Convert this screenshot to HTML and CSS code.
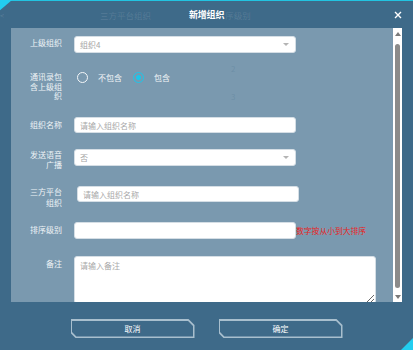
FILE: index.html
```html
<!DOCTYPE html>
<html lang="zh">
<head>
  <meta charset="UTF-8">
  <title>新增组织</title>
  <link rel="stylesheet" href="styles.css">
</head>
<body>
  <div class="dialog">
    <span class="corner corner-tl"></span>

    <div class="dlg-head">
      <span class="ghost ghost-left">&lt;</span>
      <span class="ghost ghost-a">三方平台组织</span>
      <span class="title">新增组织</span>
      <span class="ghost ghost-b">序级别</span>
      <span class="close">
        <svg width="8" height="8" viewBox="0 0 8 8"><path d="M1 1L7 7M7 1L1 7" stroke="#fff" stroke-width="1.4"/></svg>
      </span>
    </div>

    <div class="dlg-body">
      <div class="form-panel">
        <span class="ghost-num n2">2</span>
        <span class="ghost-num n3">3</span>

        <div class="row row-1">
          <label class="lbl">上级组织</label>
          <div class="select"><span>组织4</span><i class="caret"></i></div>
        </div>

        <div class="row row-2">
          <label class="lbl lbl-multi">通讯录包含上级组织</label>
          <div class="radios">
            <span class="radio"></span><span class="radio-text">不包含</span>
            <span class="radio checked"></span><span class="radio-text">包含</span>
          </div>
        </div>

        <div class="row row-3">
          <label class="lbl">组织名称</label>
          <input class="inp" type="text" placeholder="请输入组织名称">
        </div>

        <div class="row row-4">
          <label class="lbl lbl-multi">发送语音广播</label>
          <div class="select"><span>否</span><i class="caret"></i></div>
        </div>

        <div class="row row-5">
          <label class="lbl lbl-multi">三方平台组织</label>
          <input class="inp inp-shift" type="text" placeholder="请输入组织名称">
        </div>

        <div class="row row-6">
          <label class="lbl">排序级别</label>
          <input class="inp inp-sort" type="text">
          <span class="hint">数字按从小到大排序</span>
        </div>

        <div class="row row-7">
          <label class="lbl">备注</label>
          <textarea class="memo" placeholder="请输入备注"></textarea>
        </div>
      </div>

      <div class="scrollbar">
        <div class="sb-arrow sb-up"></div>
        <div class="sb-thumb"></div>
        <div class="sb-arrow sb-down"></div>
      </div>
    </div>

    <div class="dlg-foot">
      <button class="btn"><span class="btn-in">取消</span></button>
      <button class="btn"><span class="btn-in">确定</span></button>
    </div>

    <span class="corner corner-br"></span>
  </div>
</body>
</html>
```

FILE: styles.css
```css
html, body {
  margin: 0;
  padding: 0;
}

body {
  font-family: "Noto Sans CJK SC", "Noto Sans", sans-serif;
  background: #3e6a89;
  width: 413px;
  height: 350px;
  overflow: hidden;
}

.dialog {
  position: relative;
  width: 413px;
  height: 350px;
  border-top: 1px solid #22c4e2;
  box-sizing: border-box;
}

.corner {
  position: absolute;
  width: 12px;
  height: 12px;
  background: #22cdf0;
}

.corner-tl {
  top: -1px;
  left: 0;
  clip-path: polygon(0 0, 100% 0, 0 85%);
}

.corner-br {
  bottom: 0;
  right: 0;
  clip-path: polygon(100% 0, 100% 100%, 0 100%);
}

/* header */
.dlg-head {
  height: 27px;
  display: flex;
  align-items: center;
  font-size: 9px;
  color: #fff;
}

.ghost {
  color: rgba(255, 255, 255, 0.12);
  font-size: 8.5px;
}

.ghost-left {
  width: 4px;
  overflow: hidden;
}

.ghost-a {
  margin-left: 96px;
  width: 52px;
}

.title {
  margin-left: 37px;
  font-weight: bold;
  letter-spacing: -0.2px;
}

.ghost-b {
  margin-left: 1px;
}

.close {
  margin-left: auto;
  margin-right: 11px;
  height: 8px;
  display: flex;
}

/* body */
.dlg-body {
  display: flex;
  height: 274px;
  margin: 0 11px;
}

.form-panel {
  position: relative;
  flex: 1;
  background: #7a99af;
  overflow: hidden;
  padding-top: 8px;
  box-sizing: border-box;
}

.ghost-num {
  position: absolute;
  left: 220px;
  font-size: 8px;
  color: rgba(70, 110, 140, 0.25);
}

.n2 { top: 35px; }
.n3 { top: 63px; }

.row {
  display: flex;
  align-items: flex-start;
}

.row-1 { height: 36px; }
.row-2 { height: 45px; }
.row-3 { height: 32px; }
.row-4 { height: 37px; }
.row-5 { height: 36px; }
.row-6 { height: 34px; }

.lbl {
  width: 33px;
  margin-left: 18px;
  margin-right: 12px;
  text-align: right;
  font-size: 8px;
  line-height: 10px;
  color: #eef3f6;
  padding-top: 3px;
  flex-shrink: 0;
  word-break: break-all;
}

.row-1 .lbl { padding-top: 2px; }

.lbl-multi {
  padding-top: 0;
  line-height: 9.5px;
}

.row-4 .lbl { padding-top: 1px; line-height: 10px; }
.row-5 .lbl { padding-top: 0; line-height: 11px; }

.select,
.inp,
.memo {
  background: #fff;
  border: 1px solid #d5dee5;
  border-radius: 3px;
  box-sizing: border-box;
  font-family: inherit;
  font-size: 8px;
  color: #999;
}

.select {
  width: 222px;
  height: 17px;
  display: flex;
  align-items: center;
  padding: 0 6px 0 5px;
}

.select span {
  flex: 1;
  color: #a5a5a5;
}

.caret {
  width: 0;
  height: 0;
  border-left: 3px solid transparent;
  border-right: 3px solid transparent;
  border-top: 3px solid #b4b4b4;
}

.inp {
  width: 222px;
  height: 16px;
  padding: 0 5px;
  outline: none;
}

.inp::placeholder,
.memo::placeholder {
  color: #a8a8a8;
}

.inp-shift {
  margin-left: 3px;
}

.inp-sort {
  height: 17px;
}

.hint {
  font-size: 7.8px;
  color: #e8231d;
  line-height: 10px;
  margin-top: 4px;
  white-space: nowrap;
}

.radios {
  display: flex;
  align-items: center;
  height: 11px;
  margin-left: 3px;
  font-size: 8px;
  color: #f2f5f7;
}

.radio {
  width: 11px;
  height: 11px;
  border: 1px solid #f4f7f9;
  border-radius: 50%;
  box-sizing: border-box;
  display: flex;
  align-items: center;
  justify-content: center;
}

.radio.checked {
  border-color: #1dc6ea;
}

.radio.checked::after {
  content: "";
  width: 5px;
  height: 5px;
  border-radius: 50%;
  background: #1dc6ea;
}

.radio-text {
  margin-left: 10px;
  margin-right: 11px;
}

.memo {
  width: 302px;
  height: 48px;
  padding: 3px 5px;
  resize: vertical;
  outline: none;
}

/* fake scrollbar */
.scrollbar {
  width: 9px;
  background: #fff;
  display: flex;
  flex-direction: column;
  align-items: center;
}

.sb-arrow {
  width: 0;
  height: 0;
  border-left: 3px solid transparent;
  border-right: 3px solid transparent;
}

.sb-up {
  margin-top: 4px;
  border-bottom: 4px solid #7a7a7a;
}

.sb-thumb {
  width: 5px;
  flex: 1;
  margin: 8px 0 7px;
  background: #8b8b8b;
  border-radius: 3px;
}

.sb-down {
  margin-bottom: 3px;
  border-top: 4px solid #7a7a7a;
}

/* footer */
.dlg-foot {
  display: flex;
  justify-content: center;
  gap: 24px;
  padding-top: 17px;
}

.btn {
  width: 124px;
  height: 19px;
  padding: 1.5px;
  border: none;
  background: #a8bfce;
  cursor: pointer;
  clip-path: polygon(0 0, calc(100% - 6px) 0, 100% 6px, 100% 100%, 5px 100%, 0 calc(100% - 5px));
}

.btn-in {
  display: flex;
  align-items: center;
  justify-content: center;
  height: 100%;
  background: #3e6a89;
  color: #fff;
  font-family: "Noto Sans CJK SC", sans-serif;
  font-size: 8px;
  clip-path: polygon(0 0, calc(100% - 5.4px) 0, 100% 5.4px, 100% 100%, 4.4px 100%, 0 calc(100% - 4.4px));
}
```
